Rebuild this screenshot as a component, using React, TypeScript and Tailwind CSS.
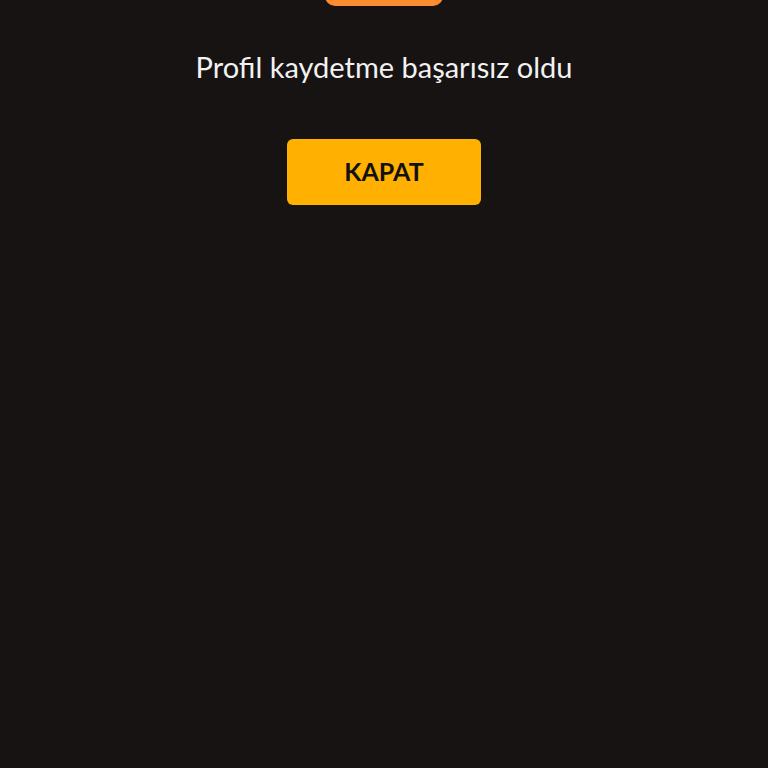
export default function App() {
  return (
    <div className="min-h-[768px] w-full bg-[#171313] flex flex-col items-center overflow-hidden" style={{ fontFamily: "Lato, 'Noto Sans', sans-serif" }}>
      <div className="mt-[-42px] h-[48px] w-[118px] rounded-[10px] bg-[#ff8c2e]" />
      <p className="mt-[41px] text-[29px] leading-[40px] text-[#f2f2f2]">Profil kaydetme başarısız oldu</p>
      <button className="mt-[52px] h-[66px] w-[194px] rounded-[6px] bg-[#ffb000] text-[25px] font-bold text-[#111]">KAPAT</button>
    </div>
  );
}
